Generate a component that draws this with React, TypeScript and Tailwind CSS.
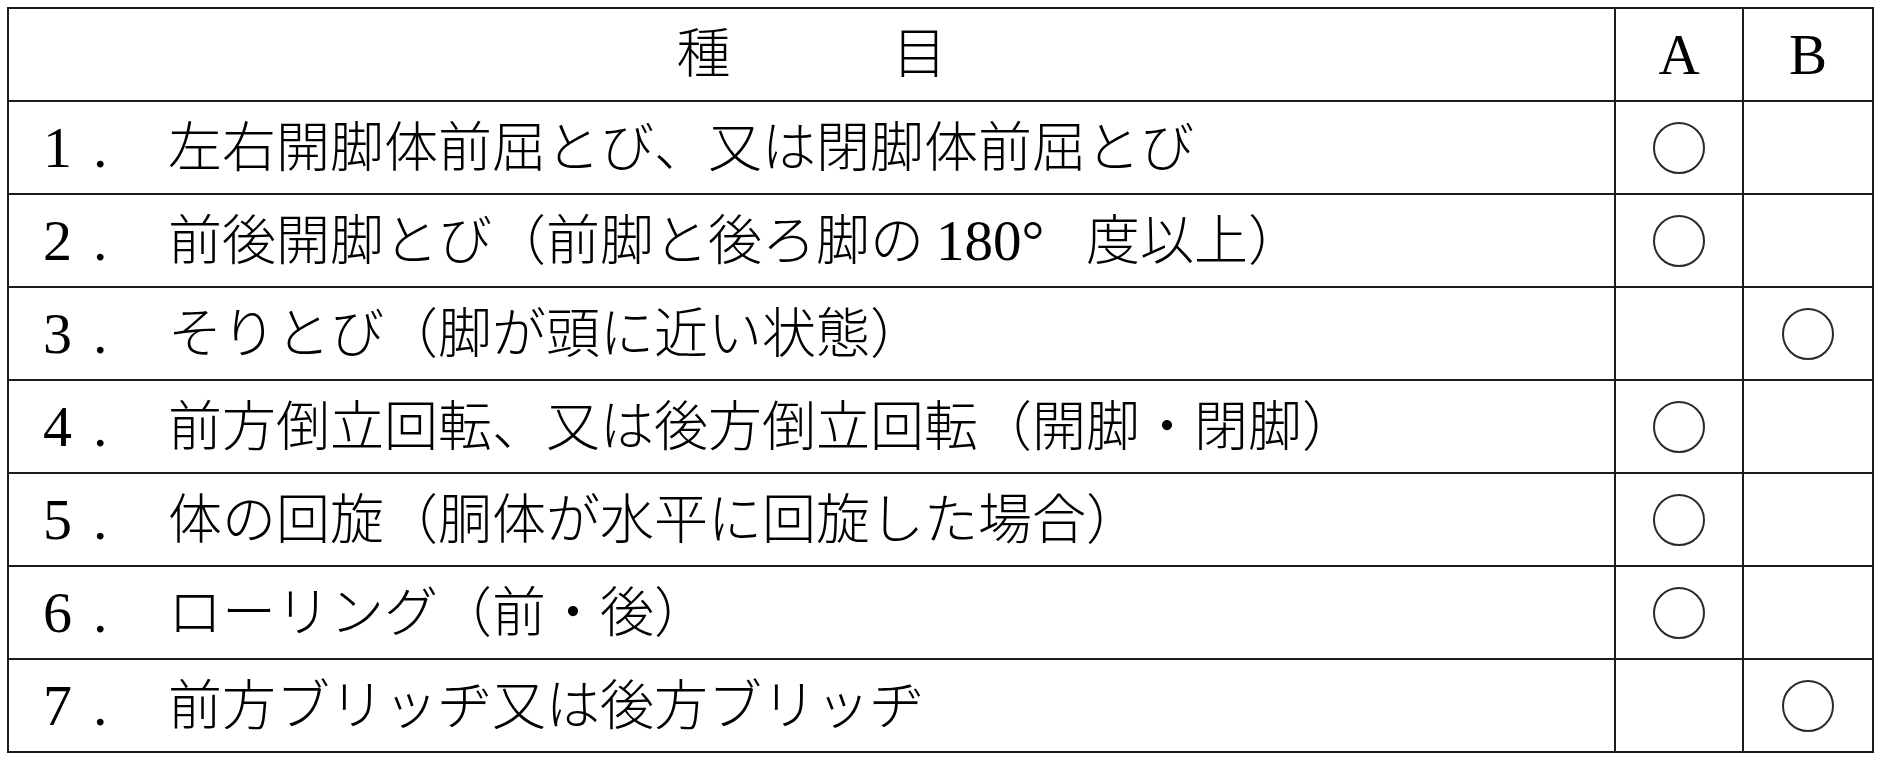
const rows: { no: string; text: React.ReactNode; mark: 'A' | 'B' }[] = [
  { no: '1', text: '左右開脚体前屈とび、又は閉脚体前屈とび', mark: 'A' },
  {
    no: '2',
    text: (
      <>
        前後開脚とび（前脚と後ろ脚の
        <span className="inline-block w-[162px] pl-[12px] text-[57px]">180°</span>
        度以上）
      </>
    ),
    mark: 'A',
  },
  { no: '3', text: 'そりとび（脚が頭に近い状態）', mark: 'B' },
  { no: '4', text: '前方倒立回転、又は後方倒立回転（開脚・閉脚）', mark: 'A' },
  { no: '5', text: '体の回旋（胴体が水平に回旋した場合）', mark: 'A' },
  { no: '6', text: 'ローリング（前・後）', mark: 'A' },
  { no: '7', text: '前方ブリッヂ又は後方ブリッヂ', mark: 'B' },
];

const font = "font-['Liberation_Serif','Noto_Sans_CJK_JP',serif]";
const cell = 'border-2 border-[#1c1c1c] p-0';

function Circle() {
  return <div className="mx-auto w-[52px] h-[52px] rounded-full border-2 border-[#2a2a2a]" />;
}

export default function App() {
  return (
    <div className="w-[1882px] h-[760px] bg-white p-[7px]">
      <table className={`${font} w-[1867px] table-fixed border-collapse text-black text-[54px] leading-none font-light`}>
        <colgroup>
          <col />
          <col className="w-[128px]" />
          <col className="w-[130px]" />
        </colgroup>
        <thead>
          <tr className="h-[93px]">
            <th className={`${cell} font-light text-center`}>種　　　目</th>
            <th className={`${cell} font-normal text-center text-[57px]`}>A</th>
            <th className={`${cell} font-normal text-center text-[57px]`}>B</th>
          </tr>
        </thead>
        <tbody>
          {rows.map((r) => (
            <tr key={r.no} className="h-[93px]">
              <td className={`${cell} pl-[34px] whitespace-nowrap`}>
                <span className="inline-block w-[125px] font-normal text-[58px]">
                  {r.no}
                  <span className="ml-[21px]">.</span>
                </span>
                {r.text}
              </td>
              <td className={cell}>{r.mark === 'A' && <Circle />}</td>
              <td className={cell}>{r.mark === 'B' && <Circle />}</td>
            </tr>
          ))}
        </tbody>
      </table>
    </div>
  );
}
